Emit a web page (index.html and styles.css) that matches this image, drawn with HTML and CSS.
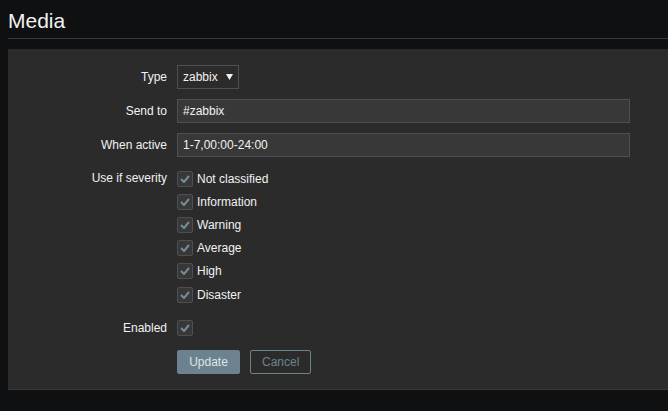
FILE: index.html
```html
<!DOCTYPE html>
<html>
<head>
<meta charset="utf-8">
<link rel="stylesheet" href="styles.css">
</head>
<body>
<header class="page-header">
  <h1 class="page-title">Media</h1>
</header>
<main class="panel">
  <form class="form-grid">
    <div class="label">Type</div>
    <div class="field">
      <div class="select"><span>zabbix</span><svg class="arrow" width="7" height="6" viewBox="0 0 7 6"><path d="M0 0H7L3.5 6Z" fill="#f2f2f2"/></svg></div>
    </div>

    <div class="label">Send to</div>
    <div class="field"><div class="textbox">#zabbix</div></div>

    <div class="label">When active</div>
    <div class="field"><div class="textbox">1-7,00:00-24:00</div></div>

    <div class="label label-top">Use if severity</div>
    <div class="field">
      <ul class="check-list">
        <li><span class="checkbox"><svg width="10" height="8" viewBox="0 0 10 8"><path d="M1 4L4 7L9 1" fill="none" stroke="#768d99" stroke-width="2"/></svg></span>Not classified</li>
        <li><span class="checkbox"><svg width="10" height="8" viewBox="0 0 10 8"><path d="M1 4L4 7L9 1" fill="none" stroke="#768d99" stroke-width="2"/></svg></span>Information</li>
        <li><span class="checkbox"><svg width="10" height="8" viewBox="0 0 10 8"><path d="M1 4L4 7L9 1" fill="none" stroke="#768d99" stroke-width="2"/></svg></span>Warning</li>
        <li><span class="checkbox"><svg width="10" height="8" viewBox="0 0 10 8"><path d="M1 4L4 7L9 1" fill="none" stroke="#768d99" stroke-width="2"/></svg></span>Average</li>
        <li><span class="checkbox"><svg width="10" height="8" viewBox="0 0 10 8"><path d="M1 4L4 7L9 1" fill="none" stroke="#768d99" stroke-width="2"/></svg></span>High</li>
        <li><span class="checkbox"><svg width="10" height="8" viewBox="0 0 10 8"><path d="M1 4L4 7L9 1" fill="none" stroke="#768d99" stroke-width="2"/></svg></span>Disaster</li>
      </ul>
    </div>

    <div class="label">Enabled</div>
    <div class="field"><span class="checkbox"><svg width="10" height="8" viewBox="0 0 10 8"><path d="M1 4L4 7L9 1" fill="none" stroke="#768d99" stroke-width="2"/></svg></span></div>

    <div class="label"></div>
    <div class="field buttons">
      <button type="button" class="btn btn-primary">Update</button>
      <button type="button" class="btn btn-alt">Cancel</button>
    </div>
  </form>
</main>
</body>
</html>
```

FILE: styles.css
```css
html, body {
  margin: 0;
  padding: 0;
  background: #0e1012;
  font-family: "Liberation Sans", Arial, sans-serif;
  font-size: 12px;
  color: #f2f2f2;
  overflow: hidden;
}

.page-header {
  margin: 0 0 10px 8px;
  border-bottom: 1px solid #383838;
  height: 39px;
  box-sizing: border-box;
  display: flex;
  align-items: flex-start;
}

.page-title {
  margin: 8px 0 0 0;
  font-size: 21px;
  font-weight: normal;
  line-height: 25px;
  color: #f2f2f2;
}

.panel {
  display: block;
  margin-left: 8px;
  background: #2b2b2b;
  border-bottom: 1px solid #383838;
  border-top: 1px solid #2b2b2b;
  padding: 10px;
}

.form-grid {
  display: grid;
  grid-template-columns: 149px 1fr;
  column-gap: 10px;
  margin: 0;
}

.label {
  text-align: right;
  padding: 5px 0;
  height: 24px;
  line-height: 24px;
  color: #f2f2f2;
}

.label-top {
  height: auto;
  line-height: 23.2px;
}

.field {
  padding: 5px 0;
  min-height: 24px;
  display: flex;
  align-items: center;
}

.select {
  box-sizing: border-box;
  width: 62px;
  height: 24px;
  background: #2b2b2b;
  border: 1px solid #4f4f4f;
  display: flex;
  align-items: center;
  justify-content: space-between;
  padding: 0 5px;
  color: #f2f2f2;
}

.arrow {
  display: block;
}

.textbox {
  box-sizing: border-box;
  width: 453px;
  height: 24px;
  line-height: 22px;
  background: #383838;
  border: 1px solid #4f4f4f;
  padding: 0 5px;
  color: #f2f2f2;
}

.check-list {
  list-style: none;
  margin: 0;
  padding: 0;
}

.check-list li {
  height: 23.2px;
  display: flex;
  align-items: center;
}

.checkbox {
  box-sizing: border-box;
  width: 16px;
  height: 16px;
  background: #383838;
  border: 1px solid #4f4f4f;
  border-radius: 2px;
  display: inline-flex;
  align-items: center;
  justify-content: center;
  margin-right: 4px;
  flex: none;
}

.checkbox svg {
  display: block;
}

.buttons {
  gap: 10px;
}

.btn {
  box-sizing: border-box;
  height: 24px;
  font-family: "Liberation Sans", Arial, sans-serif;
  font-size: 12px;
  border-radius: 2px;
  padding: 0 11px;
  margin: 0;
  line-height: 22px;
}

.btn-primary {
  width: 63px;
  background: #6c838f;
  border: 1px solid #6c838f;
  color: #dde3e6;
}

.btn-alt {
  width: 61px;
  background: transparent;
  border: 1px solid #6c838f;
  color: #6c838f;
}
```
